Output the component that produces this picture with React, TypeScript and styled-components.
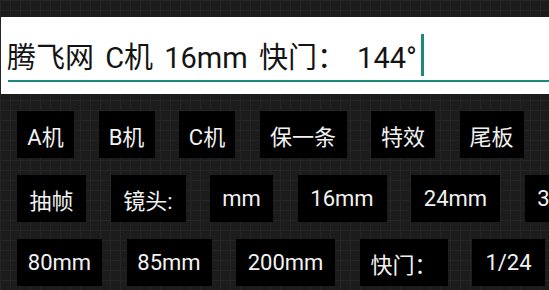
import React from "react";
import styled, { createGlobalStyle } from "styled-components";

const GlobalStyle = createGlobalStyle`
  html, body {
    margin: 0;
    padding: 0;
  }
  body {
    width: 549px;
    height: 290px;
    overflow: hidden;
    background-color: #1c1c1c;
    background-image:
      linear-gradient(#252525 1px, transparent 1px),
      linear-gradient(90deg, #252525 1px, transparent 1px);
    background-size: 10px 10px;
    font-family: Roboto, "Noto Sans CJK SC", sans-serif;
  }
`;

const Screen = styled.div`
  padding-top: 17px;
  width: 549px;
  height: 290px;
  box-sizing: border-box;
  overflow: hidden;
`;

const Field = styled.div`
  margin-left: 1px;
  height: 77px;
  box-sizing: border-box;
  background: #ffffff;
  padding: 17px 0 0 6px;
`;

const TextLine = styled.div`
  display: flex;
  align-items: center;
  height: 42px;
  font-size: 29px;
  color: #141414;
  white-space: pre;
  word-spacing: 4px;
`;

const Caret = styled.span`
  display: block;
  width: 3px;
  height: 42px;
  margin-left: 4px;
  background: #1b8a7d;
`;

const Underline = styled.div`
  margin: 4px 0 0 1px;
  height: 2px;
  background: #1b8a7d;
`;

const Keys = styled.div`
  display: flex;
  flex-direction: column;
  gap: 17px;
  padding: 17px 0 0 17px;
`;

const Row = styled.div`
  display: flex;
  gap: 24.5px;
`;

const Key = styled.div<{ $w: number }>`
  flex: none;
  width: ${(p) => p.$w}px;
  height: 47px;
  background: #000000;
  color: #f2f2f2;
  font-size: 22px;
  display: flex;
  align-items: center;
  justify-content: center;
  white-space: pre;
`;

const rows: [string, number][][] = [
  [
    ["A机", 57],
    ["B机", 56],
    ["C机", 56],
    ["保一条", 87],
    ["特效", 64],
    ["尾板", 64],
  ],
  [
    ["抽帧", 69],
    ["镜头:", 75],
    ["mm", 63],
    ["16mm", 89],
    ["24mm", 89],
    ["35mm", 89],
  ],
  [
    ["80mm", 85],
    ["85mm", 85],
    ["200mm", 99],
    ["快门：", 88],
    ["1/24", 73],
    ["1/48", 73],
  ],
];

export default function App() {
  return (
    <>
      <GlobalStyle />
      <Screen>
        <Field>
          <TextLine>
            <span>腾飞网 C机 16mm 快门： 144°</span>
            <Caret />
          </TextLine>
          <Underline />
        </Field>
        <Keys>
          {rows.map((row, i) => (
            <Row key={i}>
              {row.map(([label, w]) => (
                <Key key={label} $w={w}>
                  {label}
                </Key>
              ))}
            </Row>
          ))}
        </Keys>
      </Screen>
    </>
  );
}
